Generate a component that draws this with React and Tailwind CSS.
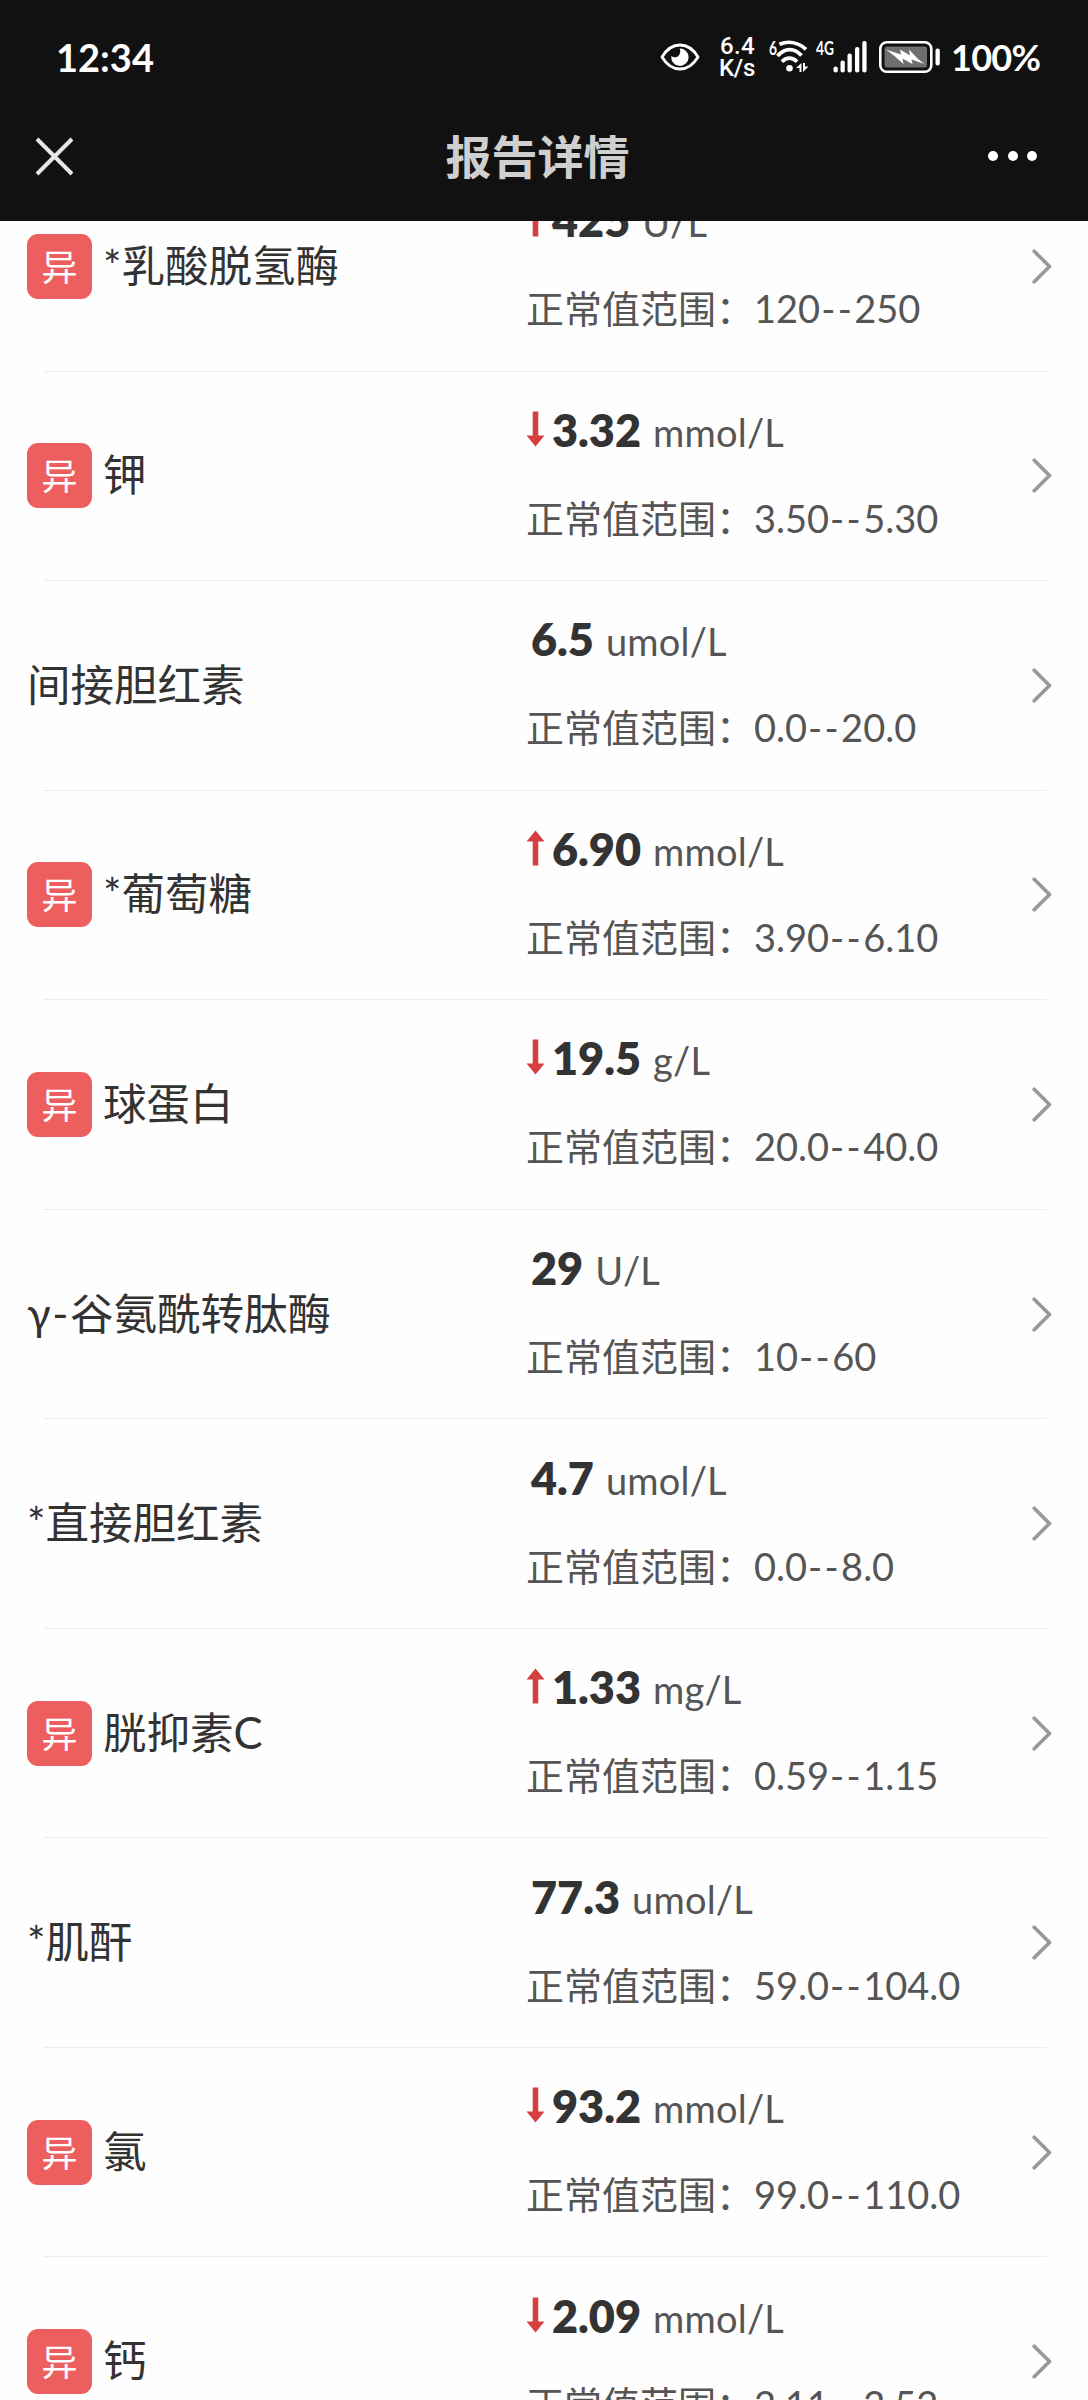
import React from 'react';

// --- Report data ---
const items = [
  { id: 1, name: '*乳酸脱氢酶', trend: 'up', value: '425', unit: 'U/L', low: '120', high: '250' },
  { id: 2, name: '钾', trend: 'down', value: '3.32', unit: 'mmol/L', low: '3.50', high: '5.30' },
  { id: 3, name: '间接胆红素', trend: null, value: '6.5', unit: 'umol/L', low: '0.0', high: '20.0' },
  { id: 4, name: '*葡萄糖', trend: 'up', value: '6.90', unit: 'mmol/L', low: '3.90', high: '6.10' },
  { id: 5, name: '球蛋白', trend: 'down', value: '19.5', unit: 'g/L', low: '20.0', high: '40.0' },
  { id: 6, prefix: 'γ-', name: '谷氨酰转肽酶', trend: null, value: '29', unit: 'U/L', low: '10', high: '60' },
  { id: 7, name: '*直接胆红素', trend: null, value: '4.7', unit: 'umol/L', low: '0.0', high: '8.0' },
  { id: 8, name: '胱抑素C', trend: 'up', value: '1.33', unit: 'mg/L', low: '0.59', high: '1.15' },
  { id: 9, name: '*肌酐', trend: null, value: '77.3', unit: 'umol/L', low: '59.0', high: '104.0' },
  { id: 10, name: '氯', trend: 'down', value: '93.2', unit: 'mmol/L', low: '99.0', high: '110.0' },
  { id: 11, name: '钙', trend: 'down', value: '2.09', unit: 'mmol/L', low: '2.11', high: '2.52' },
];

// --- Status bar icons ---
const EyeIcon = () => (
  <svg width="40" height="28" viewBox="0 0 40 28" fill="none">
    <path d="M2 14C6.5 6.5 12.5 2 20 2s13.5 4.5 18 12c-4.5 7.5-10.5 12-18 12S6.5 21.5 2 14Z" stroke="white" strokeWidth="2.8" strokeLinejoin="round" />
    <path d="M19.5 5.5A8.7 8.7 0 1 1 11.3 13c2.2 1.7 5.3 1.7 7.2-.3 2-2 2.3-4.8 1-7.2Z" fill="white" />
  </svg>
);

const WifiIcon = () => (
  <svg width="42" height="34" viewBox="0 0 42 34" fill="none" className="overflow-visible">
    <g stroke="white" strokeWidth="3.8">
      <path d="M10.5 4.3C19 .8 29 2 37 9.3" />
      <path d="M8.5 16C16 7.5 25.5 7.7 32.5 15.6" />
      <path d="M13 21.8c4.5-4.8 10.5-4.8 15 0" />
    </g>
    <circle cx="20.5" cy="28.3" r="3.3" fill="white" />
    <path d="M27 28l5.5-5v9h-2v-4ZM34 23h2v3.5h3.5l-5.5 5.5Z" fill="white" />
    <text x="0" y="14.5" fill="white" fontSize="19" fontWeight="700" textLength="8" lengthAdjust="spacingAndGlyphs">6</text>
  </svg>
);

const SignalIcon = () => (
  <svg width="52" height="34" viewBox="0 0 52 34" className="overflow-visible">
    <text x="0" y="15" fill="white" fontSize="19" fontWeight="700" textLength="18" lengthAdjust="spacingAndGlyphs">4G</text>
    <g fill="white">
      <rect x="17.5" y="26.5" width="4.3" height="6" rx="2" />
      <rect x="24.5" y="20.5" width="4.3" height="12" rx="2" />
      <rect x="31.5" y="13.5" width="4.3" height="19" rx="2" />
      <rect x="39" y="7" width="4.3" height="25.5" rx="2" />
      <rect x="46.3" y="1" width="4.3" height="31.5" rx="2" />
    </g>
  </svg>
);

const BatteryIcon = () => (
  <svg width="62" height="32" viewBox="0 0 62 32">
    <rect x="1.3" y="1.3" width="51" height="29.4" rx="6.5" fill="none" stroke="white" strokeWidth="2.6" />
    <rect x="5.5" y="5.5" width="42.5" height="21" rx="2.5" fill="#6f6f6f" />
    <path d="M7 8.5L22 13.5 21 8.5 31 14.5 30 8.5 38.5 17.5 45.5 23 32.500 18.500 33.500 23 23.500 17.500 24.500 23 16 15.500Z" fill="white" />
    <rect x="56.5" y="7.5" width="4.3" height="17" rx="2" fill="white" />
  </svg>
);

const TrendArrow = ({ trend }) => (
  <svg width="19" height="36" viewBox="0 0 19 36" className={trend === 'up' ? 'rotate-180' : ''}>
    <path d="M6.7.5h5.6v24h6.2l-9 11-9-11h6.2Z" fill="#d63f3f" />
  </svg>
);

const ChevronIcon = () => (
  <svg width="20" height="35" viewBox="0 0 20 35" fill="none">
    <path d="M2.2 2.2L17.5 17.5 2.2 32.8" stroke="#999" strokeWidth="3.7" strokeLinecap="round" strokeLinejoin="round" />
  </svg>
);

const StatusBar = () => (
  <div className="flex h-[114px] items-center pl-[56px] pr-[48px] text-white">
    <div className="flex-1 text-[38px] font-bold leading-none">12:34</div>
    <div className="flex items-center">
      <EyeIcon />
      <div className="ml-[19px] flex w-[36px] flex-col font-['Roboto'] text-[24px] font-medium leading-[22px]">
        <span className="pl-px tracking-[0.3px]">6.4</span>
        <span className="tracking-[-0.3px]">K/s</span>
      </div>
      <div className="ml-[14px]"><WifiIcon /></div>
      <div className="ml-[5px]"><SignalIcon /></div>
      <div className="ml-[11px]"><BatteryIcon /></div>
      <div className="ml-[10px] w-[89px] text-[36px] font-bold leading-none tracking-[-0.7px]">100%</div>
    </div>
  </div>
);

const TitleBar = () => (
  <div className="flex h-[84px] items-center justify-between pl-[35px] pr-[51px]">
    <svg width="39" height="39" viewBox="0 0 39 39" stroke="#e6e6e6" strokeWidth="4">
      <path d="M2 2l35 35M37 2L2 37" />
    </svg>
    <h1 className="ml-[13px] pt-px text-[46px] font-bold leading-none text-[#cfcfcf]">报告详情</h1>
    <div className="flex gap-[9.5px]">
      <span className="size-[10px] rounded-full bg-white" />
      <span className="size-[10px] rounded-full bg-white" />
      <span className="size-[10px] rounded-full bg-white" />
    </div>
  </div>
);

const ReportRow = ({ item }) => (
  <div className="h-[209.55px] pl-[27px] pr-[36px]">
    <div className="flex h-[208.55px] items-center">
      <div className="flex w-[499px] items-center gap-[11px]">
        {item.trend && (
          <span className="flex size-[65px] items-center justify-center rounded-[11px] bg-[#ec5f5e] pt-px text-[36px] leading-none text-white">
            异
          </span>
        )}
        <span className="pb-[3px] text-[43.5px] leading-[60px] text-[#333]">
          {item.prefix && <span className="tracking-[1.6px]">{item.prefix}</span>}
          {item.name}
        </span>
      </div>
      <div className="flex flex-1 flex-col gap-[33px] pb-[5px]">
        <div className="flex h-[60px] items-baseline">
          {item.trend && (
            <span className="mr-[7px]"><TrendArrow trend={item.trend} /></span>
          )}
          <span className={item.trend ? 'text-[45px] font-extrabold text-[#333]' : 'pl-[5px] text-[45px] font-extrabold text-[#333]'}>{item.value}</span>
          <span className="ml-[12px] text-[38px] tracking-[0.2px] text-[#555]">{item.unit}</span>
        </div>
        <div className="flex h-[60px] items-baseline text-[38px] text-[#555]">
          <span className="w-[228px]">正常值范围：</span>
          <span>{item.low}</span>
          <span className="pl-px tracking-[2.4px]">--</span>
          <span>{item.high}</span>
        </div>
      </div>
      <ChevronIcon />
    </div>
    <div className="ml-[16px] mr-[5px] h-px bg-[#ececec]" />
  </div>
);

export default function App() {
  return (
    <div className="flex h-[2400px] w-full flex-col overflow-hidden bg-[#fefefe] font-['Lato','Noto_Sans_CJK_SC',sans-serif]">
      <header className="h-[221px] shrink-0 bg-[#111]">
        <StatusBar />
        <TitleBar />
      </header>
      <main className="min-h-0 flex-1 overflow-hidden">
        {/* list is scrolled so the first row sits partly under the header */}
        <div className="-mt-[59px]">
          {items.map((item) => (
            <ReportRow key={item.id} item={item} />
          ))}
        </div>
      </main>
    </div>
  );
}
